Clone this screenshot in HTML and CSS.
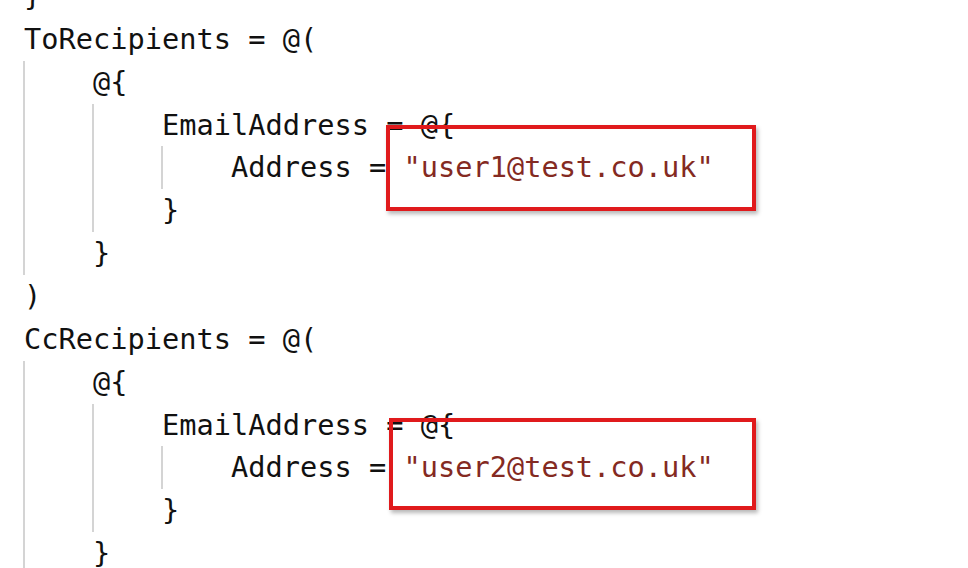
FILE: index.html
```html
<!DOCTYPE html>
<html>
<head>
<meta charset="utf-8">
<link rel="stylesheet" href="styles.css">
</head>
<body>
<div class="page">
  <div class="code">
    <div class="line">}</div>
    <div class="line">ToRecipients = @(</div>
    <div class="block">
      <div class="line">@{</div>
      <div class="block">
        <div class="line">EmailAddress = @{</div>
        <div class="block">
          <div class="line">Address = <span class="str">"user1@test.co.uk"</span></div>
        </div>
        <div class="line">}</div>
      </div>
      <div class="line">}</div>
    </div>
    <div class="line">)</div>
    <div class="line">CcRecipients = @(</div>
    <div class="block">
      <div class="line">@{</div>
      <div class="block">
        <div class="line">EmailAddress = @{</div>
        <div class="block">
          <div class="line">Address = <span class="str">"user2@test.co.uk"</span></div>
        </div>
        <div class="line">}</div>
      </div>
      <div class="line">}</div>
      <div class="line"> </div>
    </div>
  </div>
  <div class="mark mark-1"></div>
  <div class="mark mark-2"></div>
</div>
</body>
</html>
```

FILE: styles.css
```css
html, body {
  margin: 0;
  padding: 0;
  background: #ffffff;
  overflow: hidden;
}

.page {
  position: relative;
  width: 968px;
  height: 568px;
  overflow: hidden;
}

.code {
  margin-top: -25px;
  padding-left: 24px;
  font-family: "DejaVu Sans Mono", "Liberation Mono", monospace;
  font-size: 28.65px;
  line-height: 42.86px;
  color: #111111;
}

.line {
  height: 42.86px;
  white-space: pre;
}

.block {
  border-left: 2px solid #d4d4d4;
  margin-left: -1px;
  padding-left: 68px;
}

.str {
  color: #842a22;
}

.mark {
  position: absolute;
  border: 4px solid #e01a1c;
  box-shadow: 2px 3px 4px rgba(0, 0, 0, 0.28);
  box-sizing: border-box;
}

.mark-1 {
  left: 386px;
  top: 125px;
  width: 370px;
  height: 86px;
}

.mark-2 {
  left: 389px;
  top: 418px;
  width: 367px;
  height: 92px;
}
```
